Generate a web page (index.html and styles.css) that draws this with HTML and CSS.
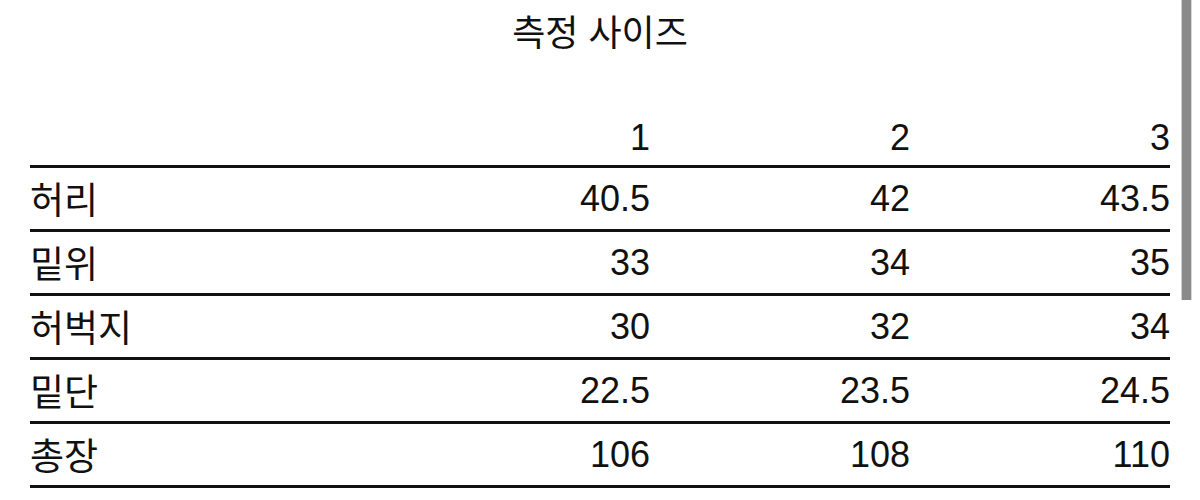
FILE: index.html
```html
<!DOCTYPE html>
<html lang="ko">
<head>
<meta charset="utf-8">
<link rel="stylesheet" href="styles.css">
</head>
<body>
<div class="page">
  <h1 class="title">측정 사이즈</h1>
  <table class="sizes">
    <thead>
      <tr><th class="label"></th><th>1</th><th>2</th><th>3</th></tr>
    </thead>
    <tbody>
      <tr><td class="label">허리</td><td>40.5</td><td>42</td><td>43.5</td></tr>
      <tr><td class="label">밑위</td><td>33</td><td>34</td><td>35</td></tr>
      <tr><td class="label">허벅지</td><td>30</td><td>32</td><td>34</td></tr>
      <tr><td class="label">밑단</td><td>22.5</td><td>23.5</td><td>24.5</td></tr>
      <tr><td class="label">총장</td><td>106</td><td>108</td><td>110</td></tr>
    </tbody>
  </table>
</div>
<div class="scrollbar"></div>
</body>
</html>
```

FILE: styles.css
```css
html, body {
  margin: 0;
  padding: 0;
  background: #ffffff;
}

body {
  font-family: "Liberation Sans", "Noto Sans CJK KR", sans-serif;
  color: #111111;
  width: 1200px;
  height: 500px;
  overflow: hidden;
  position: relative;
}

.page {
  padding: 0 30px;
}

.title {
  margin: 0;
  height: 60px;
  line-height: 60px;
  font-size: 36px;
  font-weight: normal;
  text-align: center;
  font-family: "Noto Sans CJK KR", sans-serif;
}

.sizes {
  margin-top: 50px;
  width: 1140px;
  border-collapse: collapse;
  table-layout: fixed;
  font-size: 36px;
}

.sizes th,
.sizes td {
  padding: 0;
  text-align: right;
  font-weight: normal;
  vertical-align: middle;
}

.sizes th.label,
.sizes td.label {
  width: 360px;
  text-align: left;
  font-family: "Noto Sans CJK KR", sans-serif;
  font-size: 37px;
}

.sizes thead th {
  height: 55px;
  line-height: 55px;
  border-bottom: 3px solid #111;
}

.sizes tbody td {
  height: 61px;
  line-height: 61px;
  border-bottom: 3px solid #111;
}

.scrollbar {
  position: absolute;
  top: 0;
  left: 1182px;
  width: 9px;
  height: 300px;
  background: #8a8a8a;
  box-shadow: -1px 0 0 #cfcfcf, 1px 0 0 #d8d8d8;
}
```
